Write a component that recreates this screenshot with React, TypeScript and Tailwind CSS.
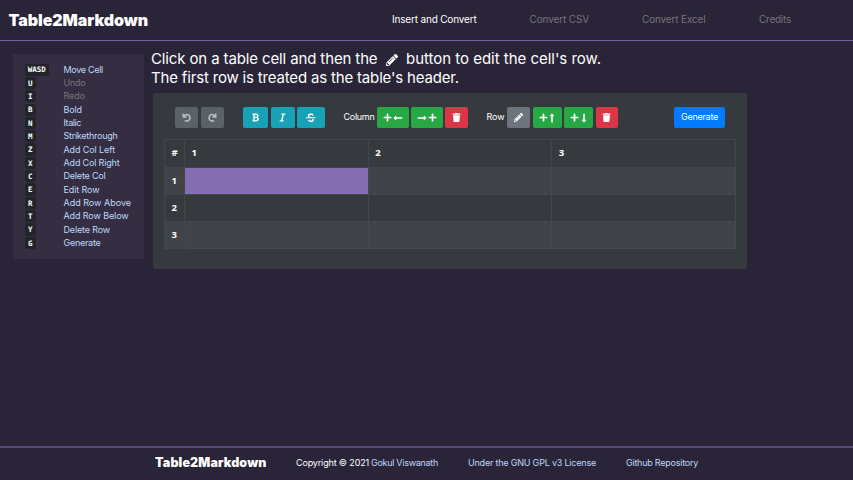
import { useLayoutEffect, useRef, type ReactNode } from "react";
import {
  FaBold,
  FaItalic,
  FaLongArrowAltDown,
  FaLongArrowAltLeft,
  FaLongArrowAltRight,
  FaLongArrowAltUp,
  FaPencilAlt,
  FaPlus,
  FaStrikethrough,
  FaTrash,
} from "react-icons/fa";

/** A single line of text, tracked so that it fills the given width. */
function Line({ width, className = "", children }: { width: number; className?: string; children: ReactNode }) {
  const ref = useRef<HTMLSpanElement>(null);
  useLayoutEffect(() => {
    const el = ref.current;
    if (!el) return;
    el.style.letterSpacing = "0px";
    const natural = el.getBoundingClientRect().width;
    const count = (el.textContent ?? "").length;
    el.style.letterSpacing = `${(width - natural) / count}px`;
  }, [width]);
  return (
    <span ref={ref} className={`block w-fit whitespace-nowrap ${className}`}>
      {children}
    </span>
  );
}

/** Open loop with a corner arrow head at its upper left; mirrored for redo. */
function TurnIcon({ mirrored = false }: { mirrored?: boolean }) {
  return (
    <svg viewBox="0 0 18 18" className={`size-[10px] text-[#b9bec1] ${mirrored ? "-scale-x-100" : ""}`} fill="none">
      <path d="M3 6.2C5 3.4 8 2.4 10.6 3A6.1 6.1 0 1 1 5 13.8" stroke="currentColor" strokeWidth="2.9" />
      <path d="M2.2 1v6.2h6.3" stroke="currentColor" strokeWidth="2.6" />
    </svg>
  );
}

const shortcuts: [string, string, number][] = [
  ["WASD", "Move Cell", 39.5],
  ["U", "Undo", 22],
  ["I", "Redo", 21.5],
  ["B", "Bold", 18.5],
  ["N", "Italic", 17.5],
  ["M", "Strikethrough", 54],
  ["Z", "Add Col Left", 51.5],
  ["X", "Add Col Right", 56],
  ["C", "Delete Col", 42],
  ["E", "Edit Row", 36],
  ["R", "Add Row Above", 67.5],
  ["T", "Add Row Below", 65],
  ["Y", "Delete Row", 46.5],
  ["G", "Generate", 37],
];

function Button({ className, children }: { className: string; children: ReactNode }) {
  return (
    <button className={`flex h-[21px] shrink-0 items-center justify-center rounded-[2px] text-white ${className}`}>
      {children}
    </button>
  );
}

function Sidebar() {
  return (
    <aside className="mt-[13px] ml-[13px] h-[205px] w-[131px] rounded-[1px] bg-[#352e42] pt-[9px] pl-[11.5px]">
      {shortcuts.map(([key, label, width]) => (
        <div key={key} className="flex h-[13.33px] items-center">
          <div className="flex w-[39px] shrink-0">
            <kbd
              className={`flex h-[12.3px] items-center justify-center rounded-[2px] bg-[#212529] pt-[1px] font-['DejaVu_Sans_Mono',monospace] text-[7.5px] leading-none font-bold text-white ${
                key === "WASD" ? "w-[24.5px]" : "w-[11.5px]"
              }`}
            >
              {key}
            </kbd>
          </div>
          <Line
            width={width}
            className={`pb-[1px] text-[9px] leading-none ${
              label === "Undo" || label === "Redo" ? "text-[#77737b]" : "text-[#bfd8fa]"
            }`}
          >
            {label}
          </Line>
        </div>
      ))}
    </aside>
  );
}

function Toolbar() {
  return (
    <div className="flex h-[21px] items-center pl-[22px] text-[9px] text-white">
      <Button className="mr-[2.5px] w-[23px] bg-[#5a6168]"><TurnIcon /></Button>
      <Button className="mr-[19px] w-[23px] bg-[#5a6168]"><TurnIcon mirrored /></Button>
      <Button className="mr-[2.5px] w-[25.5px] bg-[#17a2b8]"><FaBold size={9} /></Button>
      <Button className="mr-[2.5px] w-[24px] bg-[#17a2b8]"><FaItalic size={9} /></Button>
      <Button className="mr-[18.5px] w-[28px] bg-[#17a2b8]"><FaStrikethrough size={9.5} /></Button>
      <div className="w-[33.5px] shrink-0 pb-[1px]"><Line width={31}>Column</Line></div>
      <Button className="mr-[2.5px] w-[31.5px] gap-[0.5px] bg-[#28a745]">
        <FaPlus size={9} />
        <FaLongArrowAltLeft size={10} />
      </Button>
      <Button className="mr-[2.5px] w-[31.5px] gap-[0.5px] bg-[#28a745]">
        <FaLongArrowAltRight size={10} />
        <FaPlus size={9} />
      </Button>
      <Button className="mr-[19px] w-[22.5px] bg-[#dc3545]"><FaTrash size={9} /></Button>
      <div className="w-[20.5px] shrink-0 pb-[1px]"><Line width={18}>Row</Line></div>
      <Button className="mr-[2.5px] w-[23px] bg-[#6c757d]"><FaPencilAlt size={9} /></Button>
      <Button className="mr-[2.5px] w-[29px] gap-[1px] bg-[#28a745]">
        <FaPlus size={9} />
        <FaLongArrowAltUp size={10} className="-mx-[1.5px]" />
      </Button>
      <Button className="mr-[2.5px] w-[29px] gap-[1px] bg-[#28a745]">
        <FaPlus size={9} />
        <FaLongArrowAltDown size={10} className="-mx-[1.5px]" />
      </Button>
      <Button className="w-[22px] bg-[#dc3545]"><FaTrash size={9} /></Button>
      <Button className="mr-[22px] ml-auto w-[51px] bg-[#007bff] pb-[1px]">
        <Line width={37}>Generate</Line>
      </Button>
    </div>
  );
}

function Grid() {
  return (
    <table className="mt-[11px] ml-[11px] w-[572px] table-fixed border-collapse text-left font-['Open_Sans',sans-serif] text-[9.5px] leading-none font-bold text-white">
      <colgroup>
        <col className="w-[20px]" />
        <col />
        <col />
        <col />
      </colgroup>
      <thead>
        <tr className="h-[28px]">
          {["#", "1", "2", "3"].map((name) => (
            <th key={name} className="border border-[#40444b] pb-[1px] pl-[6.5px]">{name}</th>
          ))}
        </tr>
      </thead>
      <tbody>
        {[1, 2, 3].map((row) => (
          <tr key={row} className={`h-[27px] ${row % 2 ? "bg-[#404449]" : ""}`}>
            <th className="border border-[#40444b] pb-[1px] pl-[6.5px]">{row}</th>
            {[1, 2, 3].map((col) => (
              <td key={col} className={`border border-[#44484f] ${row === 1 && col === 1 ? "bg-[#826eb0]" : ""}`} />
            ))}
          </tr>
        ))}
      </tbody>
    </table>
  );
}

export default function App() {
  return (
    <div className="flex h-[480px] w-[853px] flex-col overflow-hidden bg-[#2a2438] font-['Inter',sans-serif]">
      <header className="flex h-[41px] shrink-0 items-center border-b border-[#7460a3] pl-[8.5px]">
        <h1 className="w-[383.5px] pb-[1px] text-[16px] font-black text-white">
          <Line width={139.5}>Table2Markdown</Line>
        </h1>
        <nav className="flex pb-[1px] text-[10px] text-[#77737b]">
          <a className="w-[137.5px] text-white"><Line width={84.5}>Insert and Convert</Line></a>
          <a className="w-[112.5px]"><Line width={59.5}>Convert CSV</Line></a>
          <a className="w-[117px]"><Line width={63.5}>Convert Excel</Line></a>
          <a><Line width={32}>Credits</Line></a>
        </nav>
      </header>

      <main className="flex grow items-start">
        <Sidebar />
        <section className="ml-[7px]">
          <div className="h-[52px] pt-[8px] text-[15px] leading-[19px] text-white">
            <div className="flex items-center">
              <Line width={226.5}>Click on a table cell and then the</Line>
              <FaPencilAlt size={12} className="mt-[2px] mr-[8px] ml-[8.5px]" />
              <Line width={195}>button to edit the cell's row.</Line>
            </div>
            <Line width={308}>The first row is treated as the table's header.</Line>
          </div>
          <div className="ml-[2px] h-[176px] w-[594px] rounded-[2px] bg-[#363a3f] pt-[14px]">
            <Toolbar />
            <Grid />
          </div>
        </section>
      </main>

      <footer className="flex h-[34px] shrink-0 items-center border-t-2 border-[#54477a] pb-[2px] pl-[155px] text-[9px] text-[#bfd8fa]">
        <div className="w-[141px] pt-[1px] text-[12.5px] font-black text-white">
          <Line width={111.5}>Table2Markdown</Line>
        </div>
        <div className="w-[75px] text-white"><Line width={73}>Copyright © 2021</Line></div>
        <a className="w-[97px]"><Line width={67}>Gokul Viswanath</Line></a>
        <a className="w-[158px]"><Line width={128}>Under the GNU GPL v3 License</Line></a>
        <a><Line width={72}>Github Repository</Line></a>
      </footer>
    </div>
  );
}
